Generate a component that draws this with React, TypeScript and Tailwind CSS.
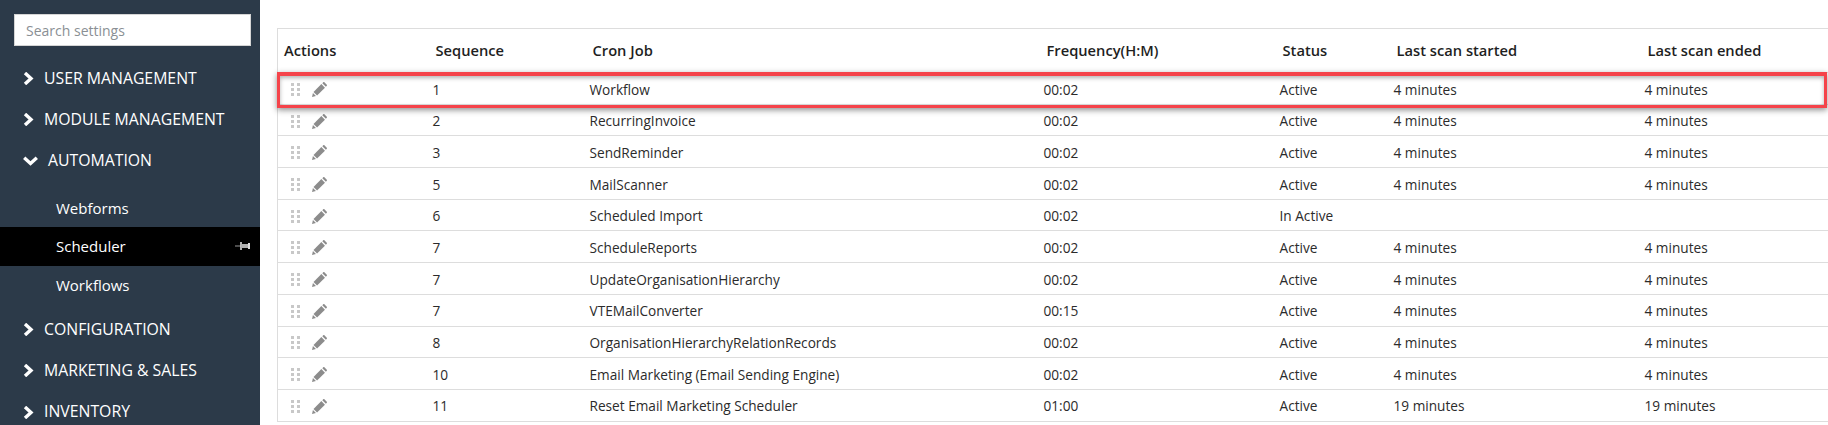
const rows = [
  ["1", "Workflow", "00:02", "Active", "4 minutes", "4 minutes"],
  ["2", "RecurringInvoice", "00:02", "Active", "4 minutes", "4 minutes"],
  ["3", "SendReminder", "00:02", "Active", "4 minutes", "4 minutes"],
  ["5", "MailScanner", "00:02", "Active", "4 minutes", "4 minutes"],
  ["6", "Scheduled Import", "00:02", "In Active", "", ""],
  ["7", "ScheduleReports", "00:02", "Active", "4 minutes", "4 minutes"],
  ["7", "UpdateOrganisationHierarchy", "00:02", "Active", "4 minutes", "4 minutes"],
  ["7", "VTEMailConverter", "00:15", "Active", "4 minutes", "4 minutes"],
  ["8", "OrganisationHierarchyRelationRecords", "00:02", "Active", "4 minutes", "4 minutes"],
  ["10", "Email Marketing (Email Sending Engine)", "00:02", "Active", "4 minutes", "4 minutes"],
  ["11", "Reset Email Marketing Scheduler", "01:00", "Active", "19 minutes", "19 minutes"],
];

const headers = ["Actions", "Sequence", "Cron Job", "Frequency(H:M)", "Status", "Last scan started", "Last scan ended"];

function NavItem({ label }: { label: string }) {
  return (
    <div className="h-[41.3px] flex items-center pl-[23px] text-white text-[15.8px]">
      <svg width="11" height="13" viewBox="0 0 11 13" className="mr-[10px] shrink-0">
        <polyline points="2,1 8,6.5 2,12" fill="none" stroke="white" strokeWidth="3.4" />
      </svg>
      {label}
    </div>
  );
}

function DragDots() {
  return (
    <div className="grid grid-cols-2 gap-x-[3px] gap-y-[2px] w-[9px]">
      {[0, 1, 2, 3, 4, 5].map((i) => (
        <span key={i} className="w-[3px] h-[3px] bg-[#c8c8c8]" />
      ))}
    </div>
  );
}

function Pencil() {
  return (
    <svg width="15" height="15" viewBox="0 0 16 16" fill="#8c8c8c">
      <path d="M1.6 10.6 10 2.2 13.8 6 5.4 14.4Z" />
      <path d="M1 11.8 4.2 15 0 16Z" />
      <path d="M11 1.2 12 .2C12.4-.1 12.9-.1 13.2.2L15.8 2.8C16.1 3.1 16.1 3.6 15.8 4L14.8 5Z" />
    </svg>
  );
}

export default function App() {
  return (
    <div className="flex h-[425px] w-[1828px] overflow-hidden bg-white font-['Open_Sans',sans-serif]">
      {/* Sidebar */}
      <aside className="w-[260px] shrink-0 bg-[#2c3a49] pt-[14px]">
        <div className="mx-[14px] w-[237px] h-[32px] bg-white border border-[#d5d5d5] flex items-center pl-[11px] text-[14px] text-[#8a8f94]">
          Search settings
        </div>
        <div className="mt-[12px]">
          <NavItem label="USER MANAGEMENT" />
          <NavItem label="MODULE MANAGEMENT" />
          <div className="h-[41.3px] flex items-center pl-[23px] text-white text-[15.8px]">
            <svg width="15" height="10" viewBox="0 0 15 10" className="mr-[10px] shrink-0">
              <polyline points="1.2,1.8 7.5,7.5 13.8,1.8" fill="none" stroke="white" strokeWidth="3.4" />
            </svg>
            AUTOMATION
          </div>
          <div className="pt-[7px] pb-[5px] text-white text-[15px]">
            <div className="h-[38px] flex items-center pl-[56px]">Webforms</div>
            <div className="h-[39px] flex items-center justify-between pl-[56px] pr-[9px] bg-black">
              Scheduler
              <svg width="16" height="8" viewBox="0 0 16 8" fill="#dcdcdc">
                <rect x="0" y="3.5" width="6" height="1" opacity="0.7" />
                <rect x="5" y="0" width="2" height="8" opacity="0.8" />
                <rect x="7" y="2" width="6" height="4" opacity="0.8" />
                <rect x="13" y="1" width="2" height="6" />
              </svg>
            </div>
            <div className="h-[38px] flex items-center pl-[56px]">Workflows</div>
          </div>
          <NavItem label="CONFIGURATION" />
          <NavItem label="MARKETING & SALES" />
          <NavItem label="INVENTORY" />
        </div>
      </aside>

      {/* Scheduler table */}
      <main className="relative flex-1 pl-[17px] pt-[28px]">
        <table className="w-[1551px] table-fixed border-collapse border-t border-l border-[#dddddd] text-[13.65px] text-[#2b2b2b]">
          <colgroup>
            <col className="w-[150px]" />
            <col className="w-[157px]" />
            <col className="w-[454px]" />
            <col className="w-[236px]" />
            <col className="w-[114px]" />
            <col className="w-[251px]" />
            <col className="w-[189px]" />
          </colgroup>
          <thead>
            <tr className="h-[44px] border-b border-[#dddddd]">
              {headers.map((h, i) => (
                <th
                  key={h}
                  className={`text-left font-semibold text-[14.7px] text-[#1f1f1f] ${i === 0 ? "pl-[6px]" : "pl-[8px]"}`}
                >
                  {h}
                </th>
              ))}
            </tr>
          </thead>
          <tbody>
            {rows.map((r, i) => (
              <tr key={i} className="h-[31.7px] border-b border-[#dddddd]">
                <td className="pl-[13px] pt-[2px]">
                  <div className="flex items-center gap-[12px]">
                    <DragDots />
                    <Pencil />
                  </div>
                </td>
                {r.map((c, j) => (
                  <td key={j} className="pl-[5px] pt-[3px] whitespace-nowrap">
                    {c}
                  </td>
                ))}
              </tr>
            ))}
          </tbody>
        </table>
        {/* Red callout over the first row */}
        <div className="absolute left-[17px] top-[72px] w-[1550px] h-[36px] border-[3px] border-t-4 border-[#f5434a] shadow-[0_2px_6px_rgba(0,0,0,0.45),inset_0_2px_4px_rgba(0,0,0,0.3)]" />
      </main>
    </div>
  );
}
